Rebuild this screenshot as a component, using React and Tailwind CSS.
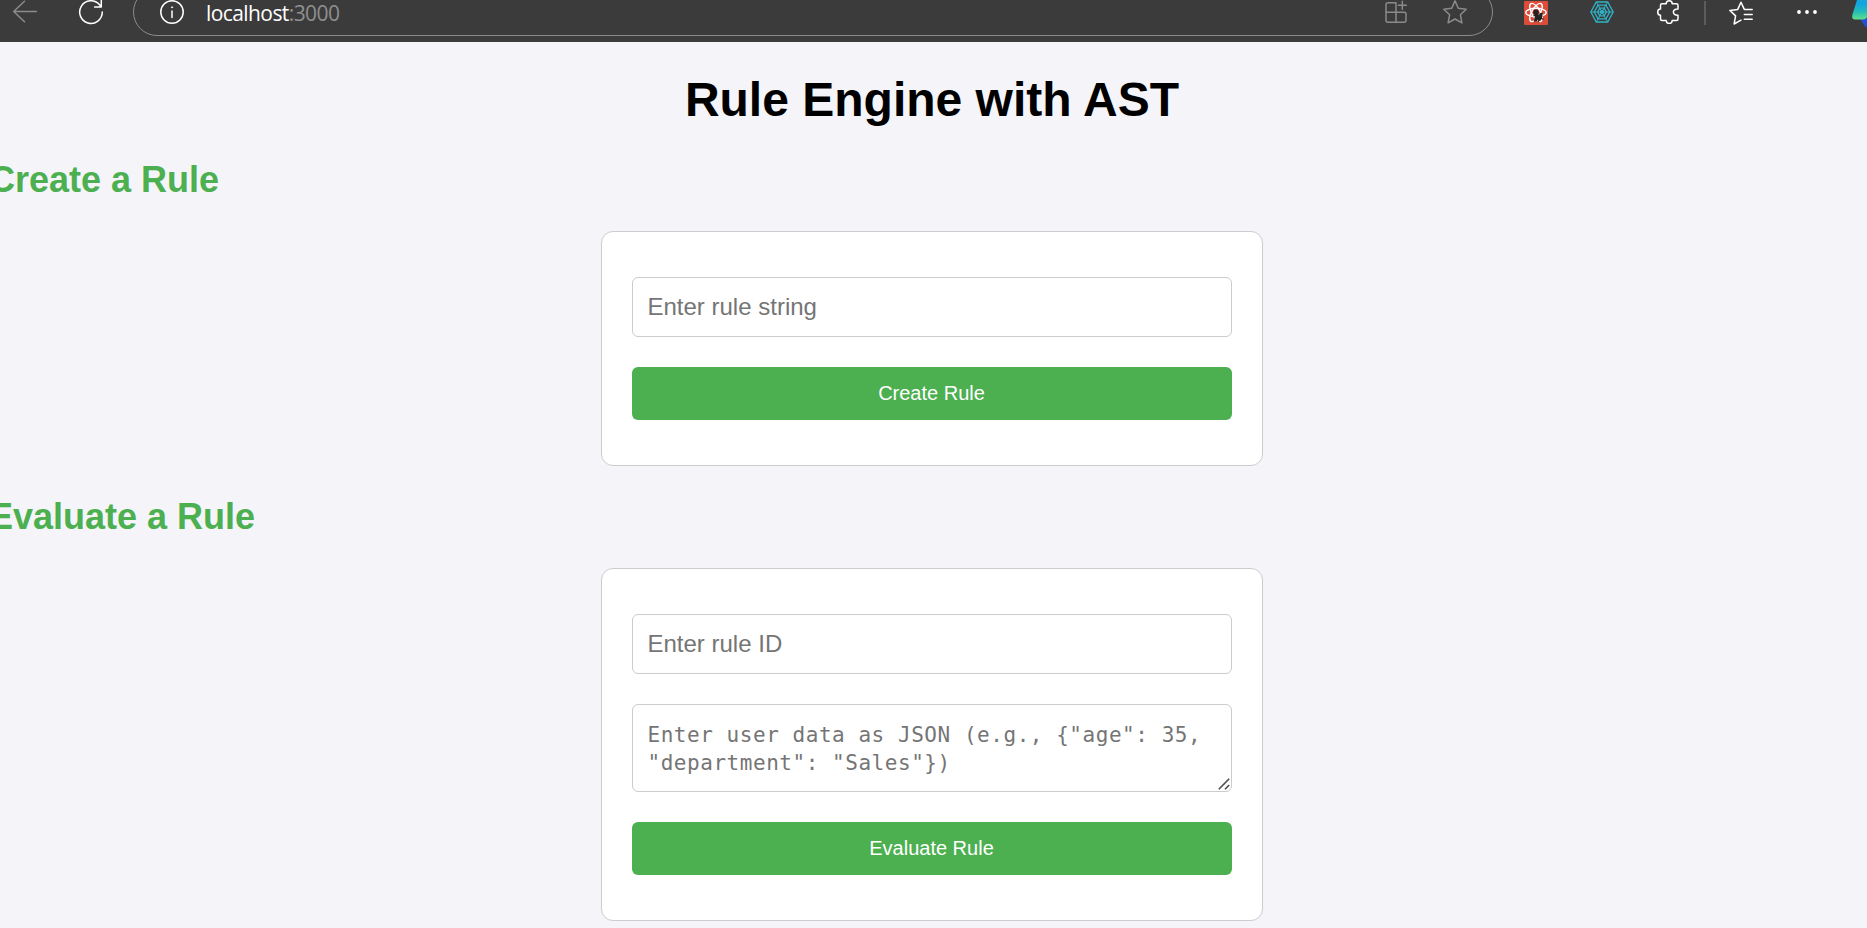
const stroke = { fill: "none", strokeLinecap: "round", strokeLinejoin: "round" };

function BackIcon() {
  return (
    <svg width="24" height="24" viewBox="0 0 24 24" {...stroke} stroke="#8b8b8b" strokeWidth="1.5">
      <path d="M23.5 11.5H0.7M11.5 1.2L0.7 11.5L11.5 21.8" />
    </svg>
  );
}

function ReloadIcon() {
  return (
    <svg width="24" height="24" viewBox="0 0 24 24" className="overflow-visible" {...stroke} stroke="#fff" strokeWidth="1.5">
      <path d="M23.3 12A11.3 11.3 0 1 1 20.4 4.5L22 6.7M22.3 0V6.9H15.6" />
    </svg>
  );
}

function InfoIcon() {
  return (
    <svg width="24" height="24" viewBox="0 0 24 24" {...stroke} stroke="#fff" strokeWidth="1.5">
      <circle cx="12" cy="12" r="11.2" />
      <path d="M12 11V17.5" />
      <circle cx="12" cy="7.3" r="0.6" fill="#fff" strokeWidth="0.8" />
    </svg>
  );
}

function AppsIcon() {
  return (
    <svg width="24" height="24" viewBox="0 0 24 24" {...stroke} stroke="#8b8b8b" strokeWidth="1.5">
      <path d="M11 12.2V2.8H3Q1 2.8 1 4.8V20.3Q1 22.3 3 22.3H19Q21 22.3 21 20.3V14.2Q21 12.2 19 12.2H1M11 12.2V22.3M17.3 1.2V9.2M13.3 5.2H21.3" />
    </svg>
  );
}

function StarIcon() {
  return (
    <svg width="24" height="24" viewBox="0 0 24 24" {...stroke} stroke="#8b8b8b" strokeWidth="1.5">
      <path d="M12 0.9L15.3 8.2L23.2 9.2L17.4 14.8L18.9 22.9L12 19L5.1 22.9L6.6 14.8L0.8 9.2L8.7 8.2Z" />
    </svg>
  );
}

function ReactDebugIcon() {
  return (
    <svg width="24" height="24" viewBox="0 0 24 24">
      <rect width="24" height="24" rx="1" fill="#dd4b39" />
      <g fill="none" stroke="#fff" strokeWidth="1.4">
        <ellipse cx="12" cy="11.5" rx="10.2" ry="4.2" />
        <ellipse cx="12" cy="11.5" rx="10.2" ry="4.2" transform="rotate(60 12 11.5)" />
        <ellipse cx="12" cy="11.5" rx="10.2" ry="4.2" transform="rotate(120 12 11.5)" />
      </g>
      <g fill="#222" stroke="#222" strokeWidth="1.3">
        <circle cx="12" cy="11.3" r="2.1" />
        <ellipse cx="12.6" cy="16.6" rx="1.3" ry="3.2" transform="rotate(18 12.6 16.6)" />
        <ellipse cx="16.2" cy="15.8" rx="1.3" ry="3.2" transform="rotate(18 16.2 15.8)" />
        <path fill="none" d="M9.5 14.8L12.5 14M10 20.5L12 18.5M14 21L15.5 18.5M16 13.2L18.5 12M17 17L19.5 18.5" />
      </g>
    </svg>
  );
}

function WebIcon() {
  return (
    <svg width="24" height="24" viewBox="0 0 24 24" fill="none" stroke="#2fb4c8" strokeWidth="1.3">
      <path d="M0.8 12L6.3 2H17.7L23.2 12L17.7 22H6.3Z" />
      <path d="M4.2 12L8.1 5.2H15.9L19.8 12L15.9 18.8H8.1Z" />
      <path d="M7.6 12L9.8 8.2H14.2L16.4 12L14.2 15.8H9.8Z" />
      <path d="M0.8 12H23.2M6.3 2L17.7 22M17.7 2L6.3 22" strokeWidth="1" />
      <circle cx="12" cy="12" r="1.4" fill="#2fb4c8" />
    </svg>
  );
}

function PuzzleIcon() {
  return (
    <svg width="24" height="24" viewBox="0 0 24 24" {...stroke} stroke="#fff" strokeWidth="1.5">
      <path d="M3.5 5.2Q3.5 3.7 5 3.7H9.2C9.2 -0.2 15.2 -0.2 15.2 3.7H19.5Q21 3.7 21 5.2V9C14.8 8.6 14.8 15.6 21 15.2V19Q21 20.5 19.5 20.5H15.2C15.2 24.4 9.2 24.4 9.2 20.5H5Q3.5 20.5 3.5 19V15.2C-0.2 15.2 -0.2 9 3.5 9Z" />
    </svg>
  );
}

function FavoritesIcon() {
  return (
    <svg width="24" height="24" viewBox="0 0 24 24" {...stroke} stroke="#fff" strokeWidth="1.5">
      <path d="M23.2 8.4H15.3L12 1.2L8.7 8.4L0.9 9.4L6.6 14.9L5.1 23L12 19.2M15.3 13.4H23.2M15.3 18.3H23.2" />
    </svg>
  );
}

function MoreIcon() {
  return (
    <svg width="20" height="4" viewBox="0 0 20 4" fill="#fff">
      <circle cx="2" cy="2" r="1.9" />
      <circle cx="10" cy="2" r="1.9" />
      <circle cx="18" cy="2" r="1.9" />
    </svg>
  );
}

function CopilotIcon() {
  return (
    <svg width="16" height="32" viewBox="0 0 16 32">
      <defs>
        <linearGradient id="leaf" x1="0" y1="0" x2="0" y2="1">
          <stop offset="0.2" stopColor="#12a5e0" />
          <stop offset="0.6" stopColor="#22bdb8" />
          <stop offset="1" stopColor="#5fe08a" />
        </linearGradient>
      </defs>
      <path d="M8 22H16V31.5Q12 31 10.8 27Z" fill="#1f50dc" />
      <path d="M5 4H16V18.5Q15 23.5 11 23.5H3Q-0.5 23.5 0.3 19Z" fill="url(#leaf)" />
    </svg>
  );
}

function ResizeGrip() {
  return (
    <svg
      width="12"
      height="12"
      viewBox="0 0 12 12"
      className="pointer-events-none absolute right-[2px] bottom-[2px]"
      stroke="#4a4a4a"
      strokeWidth="1.6"
    >
      <path d="M0.8 11.2L11.2 0.8M7 11.2L11.2 7" />
    </svg>
  );
}

function Toolbar() {
  return (
    <div className="h-[42px] shrink-0 overflow-hidden bg-[#3b3b3b]">
      <div className="-mt-[18px] flex h-[60px] w-[1868px] items-center">
        <div className="ml-[13px] flex"><BackIcon /></div>
        <div className="ml-[42px] flex"><ReloadIcon /></div>
        <div className="ml-[30px] flex h-[48px] w-[1360px] shrink-0 items-center rounded-full border-[1.5px] border-[#8b8b8b] pr-[25px] pl-[26px]">
          <InfoIcon />
          <span className="ml-[22px] pt-px font-['Open_Sans',sans-serif] text-[21px] leading-[28px] tracking-[-0.58px] text-white">
            localhost<span className="text-[#8f8f8f]">:3000</span>
          </span>
          <div className="ml-auto flex gap-[34px]">
            <AppsIcon />
            <StarIcon />
          </div>
        </div>
        <div className="ml-[31px] flex pt-[2px]"><ReactDebugIcon /></div>
        <div className="ml-[42px] flex"><WebIcon /></div>
        <div className="ml-[43px] flex"><PuzzleIcon /></div>
        <div className="mt-[2px] ml-[23px] h-[24px] w-[2px] bg-[#5c5c5c]" />
        <div className="ml-[23px] flex pt-px"><FavoritesIcon /></div>
        <div className="ml-[44px] flex"><MoreIcon /></div>
        <div className="ml-[35px] flex"><CopilotIcon /></div>
      </div>
    </div>
  );
}

const fieldClass =
  "block w-full rounded-[6px] border border-[#cccccc] bg-white pr-[15px] pl-[14.5px] placeholder:text-[#757575] outline-none";

function TextField({ placeholder }) {
  return (
    <input
      type="text"
      placeholder={placeholder}
      className={`${fieldClass} h-[60px] text-[24px] leading-[28px]`}
    />
  );
}

function TextArea({ placeholder }) {
  return (
    <div className="relative">
      <textarea
        placeholder={placeholder}
        className={`${fieldClass} h-[88px] resize-none overflow-hidden pt-[16px] pb-[14px] font-['DejaVu_Sans_Mono',monospace] text-[21px] leading-[28px] tracking-[0.54px]`}
      />
      <ResizeGrip />
    </div>
  );
}

function SubmitButton({ children }) {
  return (
    <button
      type="button"
      className="block h-[53px] w-full rounded-[6px] bg-[#4caf50] pr-px text-center text-[20px] leading-[23px] text-white"
    >
      {children}
    </button>
  );
}

function Card({ children }) {
  return (
    <div className="ml-[601px] flex w-[662px] flex-col gap-[30px] rounded-[12px] border border-[#cccccc] bg-white px-[30px] py-[45px]">
      {children}
    </div>
  );
}

function SectionTitle({ children }) {
  return (
    <h2 className="-ml-[11px] text-[36px] leading-[42px] font-bold text-[#4caf50]">{children}</h2>
  );
}

export default function App() {
  return (
    <div className="flex h-[928px] w-full flex-col overflow-hidden bg-[#f4f4f9] font-['Liberation_Sans',Arial,sans-serif]">
      <Toolbar />
      <main className="flex flex-col">
        <h1 className="mt-[30px] w-[1864px] text-center text-[48px] leading-[56px] font-bold text-black">
          Rule Engine with AST
        </h1>
        <div className="mt-[31px]">
          <SectionTitle>Create a Rule</SectionTitle>
        </div>
        <div className="mt-[30px]">
          <Card>
            <TextField placeholder="Enter rule string" />
            <SubmitButton>Create Rule</SubmitButton>
          </Card>
        </div>
        <div className="mt-[30px]">
          <SectionTitle>Evaluate a Rule</SectionTitle>
        </div>
        <div className="mt-[30px]">
          <Card>
            <TextField placeholder="Enter rule ID" />
            <TextArea placeholder={'Enter user data as JSON (e.g., {"age": 35, "department": "Sales"})'} />
            <SubmitButton>Evaluate Rule</SubmitButton>
          </Card>
        </div>
      </main>
    </div>
  );
}
